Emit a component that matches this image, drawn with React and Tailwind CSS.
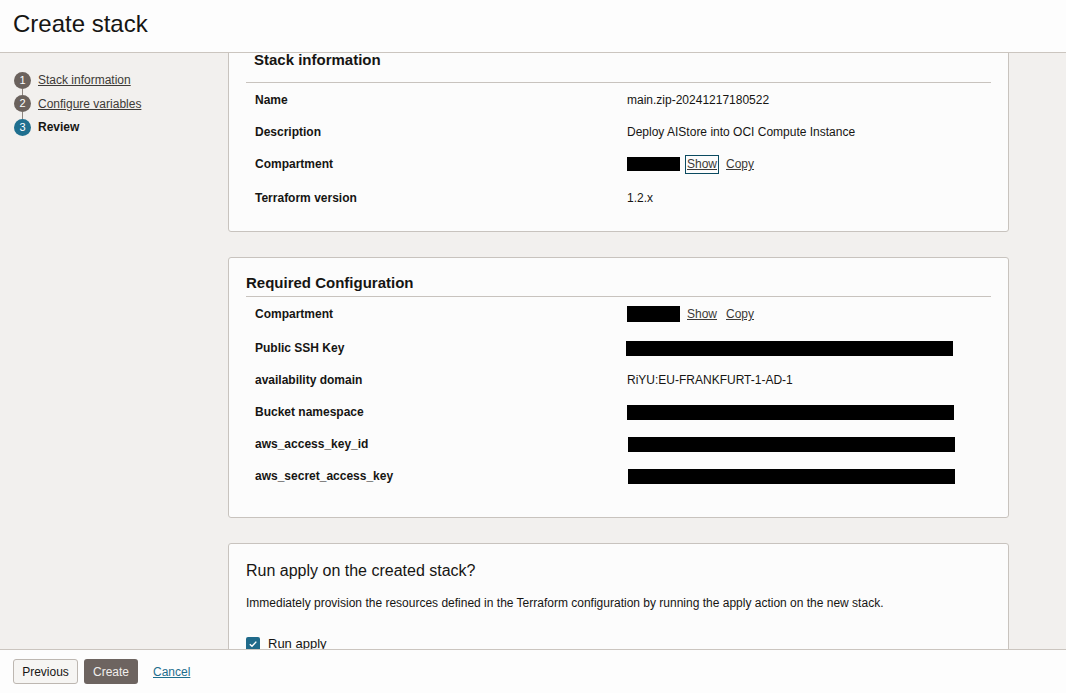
import React from "react";

const font = { fontFamily: '"Liberation Sans", Arial, Helvetica, sans-serif' };

function Step({ n, label, active, last }) {
  return (
    <>
      <div className="flex items-center h-[17px]">
        <div
          className={
            "w-[17px] h-[17px] rounded-full flex items-center justify-center text-[11px] text-white shrink-0 " +
            (active ? "bg-[#1f6f8f]" : "bg-[#6b625d]")
          }
        >
          {n}
        </div>
        <span
          className={
            "ml-[7px] text-[12px] " +
            (active ? "font-bold text-[#161513]" : "underline text-[#3d3a37]")
          }
        >
          {label}
        </span>
      </div>
      {!last && <div className="w-px h-[6.5px] ml-[8px] bg-[#8d857f]" />}
    </>
  );
}

function Row({ label, children, extra }) {
  return (
    <div className={"grid grid-cols-[372px_1fr] pl-[9px] " + (extra ? "pb-[2px]" : "")}>
      <div className="h-[32px] flex items-center text-[12px] font-bold text-[#161513]">{label}</div>
      <div className="h-[32px] flex items-center text-[12px] text-[#161513]">{children}</div>
    </div>
  );
}

function Redacted({ w, h }) {
  return <div className="bg-black" style={{ width: w, height: h }} />;
}

function Compartment({ focused, boxH }) {
  return (
    <div className="flex items-center">
      <Redacted w={53} h={boxH} />
      <span
        className={
          "ml-[5px] underline text-[#3d3a37] leading-[17px] px-[1px] " +
          (focused ? "border border-[#0b4a60]" : "border border-transparent")
        }
      >
        Show
      </span>
      <span className="ml-[7px] underline text-[#3d3a37]">Copy</span>
    </div>
  );
}

export default function App() {
  return (
    <div
      className="w-full h-[693px] flex flex-col bg-[#f2f0ee] overflow-hidden text-[#161513]"
      style={font}
    >
      {/* header */}
      <div className="h-[53px] shrink-0 bg-[#fdfdfd] border-b border-[#cbc5bf] flex items-center px-[13px] relative z-10">
        <h1 className="text-[24px] leading-[30px] text-[#161513] -mt-[5px]">Create stack</h1>
      </div>

      {/* body */}
      <div className="flex-1 flex overflow-hidden">
        <div className="w-[228px] shrink-0 pl-[14px] pt-[18.5px] flex flex-col">
          <Step n="1" label="Stack information" />
          <Step n="2" label="Configure variables" />
          <Step n="3" label="Review" active last />
        </div>

        <div className="flex-1 pr-[57px] flex flex-col gap-[25px] overflow-hidden">
          {/* Card 1 */}
          <div className="-mt-[20px] shrink-0 bg-[#fcfcfc] border border-[#c8c3be] rounded-[3px] px-[17px] pt-[16px] pb-[17px]">
            <div className="pl-[8px] pb-[12px] border-b border-[#c8c3be] text-[15px] leading-[20px] font-bold">
              Stack information
            </div>
            <div className="pt-[1px]">
              <Row label="Name">main.zip-20241217180522</Row>
              <Row label="Description">Deploy AIStore into OCI Compute Instance</Row>
              <Row label="Compartment" extra>
                <Compartment focused boxH={14} />
              </Row>
              <Row label="Terraform version">1.2.x</Row>
            </div>
          </div>

          {/* Card 2 */}
          <div className="shrink-0 bg-[#fcfcfc] border border-[#c8c3be] rounded-[3px] px-[17px] pt-[15px] pb-[25px]">
            <div className="pb-[3px] border-b border-[#c8c3be] text-[15px] leading-[20px] font-bold">
              Required Configuration
            </div>
            <div className="pt-[1px]">
              <Row label="Compartment" extra>
                <Compartment boxH={16} />
              </Row>
              <Row label="Public SSH Key">
                <div className="-ml-[1px]">
                  <Redacted w={327} h={15} />
                </div>
              </Row>
              <Row label="availability domain">RiYU:EU-FRANKFURT-1-AD-1</Row>
              <Row label="Bucket namespace">
                <Redacted w={327} h={15} />
              </Row>
              <Row label="aws_access_key_id">
                <div className="ml-[1px]">
                  <Redacted w={327} h={15} />
                </div>
              </Row>
              <Row label="aws_secret_access_key">
                <div className="ml-[1px]">
                  <Redacted w={327} h={15} />
                </div>
              </Row>
            </div>
          </div>

          {/* Card 3 */}
          <div className="shrink-0 bg-[#fcfcfc] border border-[#c8c3be] rounded-[3px] px-[17px] pt-[17px] pb-[20px]">
            <div className="text-[16px] leading-[20px]">Run apply on the created stack?</div>
            <div className="mt-[14px] text-[12px] leading-[16px]">
              Immediately provision the resources defined in the Terraform configuration by running the apply action on the new stack.
            </div>
            <div className="mt-[23px] flex items-center">
              <div className="w-[14px] h-[14px] rounded-[2px] bg-[#1f6a8a] flex items-center justify-center">
                <svg width="10" height="10" viewBox="0 0 10 10">
                  <path d="M1.8 5.2 L4 7.3 L8.3 2.6" fill="none" stroke="#fff" strokeWidth="1.4" />
                </svg>
              </div>
              <span className="ml-[8px] text-[13px]">Run apply</span>
            </div>
          </div>
        </div>
      </div>

      {/* footer */}
      <div className="h-[44px] shrink-0 bg-[#fdfdfd] border-t border-[#cbc5bf] flex items-center px-[13px] relative z-10">
        <button className="h-[25px] w-[65px] border border-[#bdb7b1] rounded-[3px] bg-[#f6f5f3] text-[12px] text-[#161513]">
          Previous
        </button>
        <button className="ml-[6px] h-[25px] w-[54px] rounded-[3px] bg-[#6d6460] text-[12px] text-[#f1efed]">
          Create
        </button>
        <span className="ml-[15px] text-[12px] underline text-[#1e6e8e]">Cancel</span>
      </div>
    </div>
  );
}
